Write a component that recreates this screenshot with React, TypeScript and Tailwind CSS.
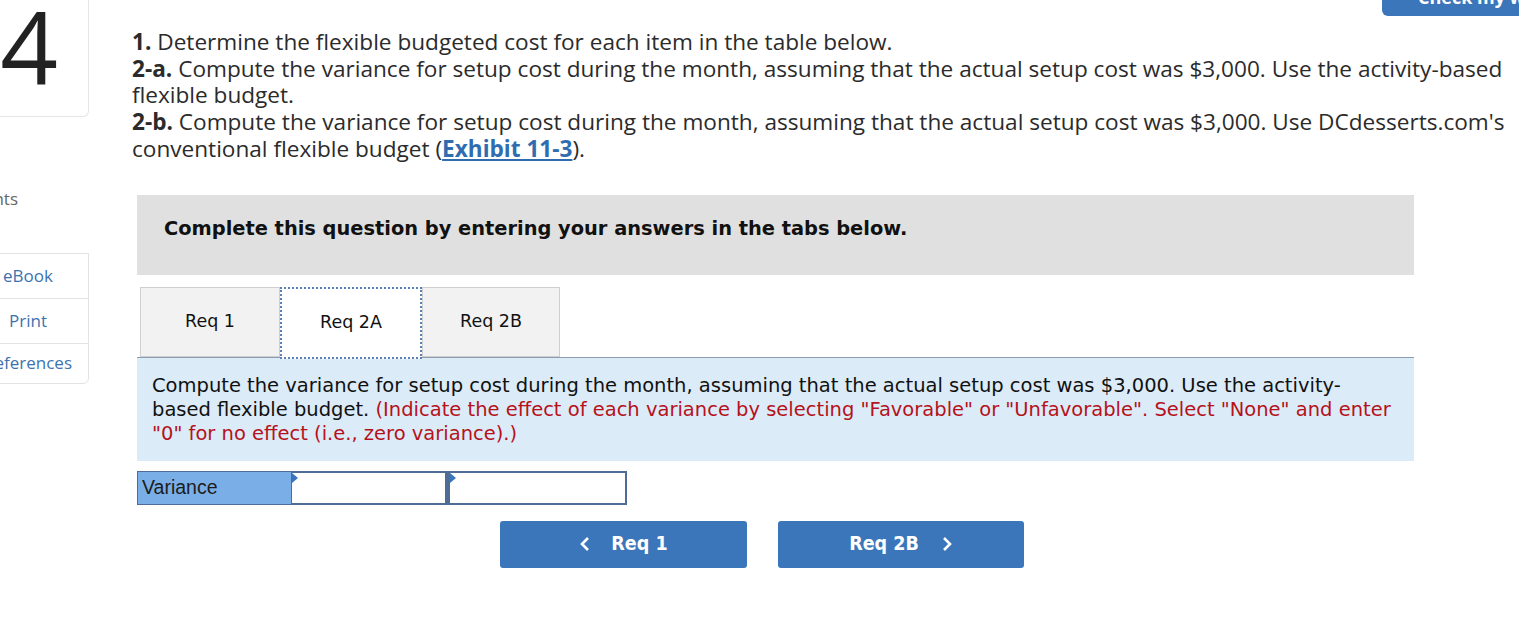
import React from 'react';

const verdana = "font-['DejaVu_Sans',Verdana,sans-serif]";

function SideButton({ label, h, last }: { label: string; h: string; last?: boolean }) {
  return (
    <div
      className={`flex ${h} items-center justify-center border border-[#e3e3e3] bg-white text-[17px] text-[#3d72b0] ${
        last ? 'rounded-br-md' : 'border-b-0'
      }`}
    >
      {label}
    </div>
  );
}

function Tab({ label, w, active }: { label: string; w: string; active?: boolean }) {
  return (
    <div
      className={
        active
          ? `relative z-10 -mb-[2px] flex h-[72px] ${w} items-center justify-center border-2 border-dotted border-[#5b7fb8] bg-white`
          : `flex h-[70px] ${w} items-center justify-center border border-[#cfcfcf] bg-[#f2f2f2]`
      }
    >
      <span className={`${verdana} text-[17.5px] text-[#111]`}>{label}</span>
    </div>
  );
}

export default function App() {
  return (
    <div className="relative h-[633px] w-[1519px] overflow-hidden bg-white font-['Open_Sans',sans-serif]">
      {/* header action, clipped at top */}
      <div className="absolute right-0 top-0 flex h-[16px] w-[137px] items-end overflow-hidden rounded-bl-md bg-[#3a76b9] pb-[10px] pl-[36px]">
        <span className="whitespace-nowrap text-[18px] font-bold leading-none text-white">Check my work</span>
      </div>

      <div className="flex">
        {/* left rail */}
        <div className="-ml-[33px] flex w-[122px] shrink-0 flex-col">
          <div className="flex h-[117px] items-start justify-center rounded-br-md border border-t-0 border-[#e6e6e6] pl-[2px]">
            <span className="text-[101px] font-[380] leading-[92px] text-[#222]">4</span>
          </div>
          <div className="mt-[69px] flex w-[51px] justify-end whitespace-nowrap text-[17px] text-[#666]">
            Points
          </div>
          <div className="mt-[41px] flex flex-col">
            <SideButton label="eBook" h="h-[45px]" />
            <SideButton label="Print" h="h-[45px]" />
            <SideButton label="References" h="h-[41px]" last />
          </div>
        </div>

        {/* main */}
        <div className="ml-[43px] flex flex-col pt-[29px]">
          <div className="w-[1386px] whitespace-nowrap text-[22.6px] leading-[26.7px] text-[#2b2b2b]">
            <p>
              <b>1.</b> Determine the flexible budgeted cost for each item in the table below.
            </p>
            <p>
              <b>2-a.</b> Compute the variance for setup cost during the month, assuming that the actual setup cost
              was $3,000. Use the activity-based
              <br />
              flexible budget.
            </p>
            <p>
              <b>2-b.</b> Compute the variance for setup cost during the month, assuming that the actual setup cost
              was $3,000. Use DCdesserts.com's
              <br />
              conventional flexible budget (
              <a className="font-bold text-[#2f6db0] underline underline-offset-2">Exhibit 11-3</a>).
            </p>
          </div>

          <div className="ml-[5px] mt-[32px] w-[1277px]">
            <div className="h-[80px] bg-[#e0e0e0] pl-[27px] pt-[22px]">
              <p className={`${verdana} text-[19.4px] font-bold leading-[24px] text-[#111]`}>
                Complete this question by entering your answers in the tabs below.
              </p>
            </div>

            <div className="mt-[12px] flex pl-[3px]">
              <Tab label="Req 1" w="w-[140px]" />
              <Tab label="Req 2A" w="w-[142px]" active />
              <Tab label="Req 2B" w="w-[138px]" />
            </div>

            <div
              className={`${verdana} whitespace-nowrap border-t border-[#8c9db0] bg-[#dcebf8] px-[15px] pb-[15px] pt-[16px] text-[19.5px] leading-[24px] text-[#111]`}
            >
              Compute the variance for setup cost during the month, assuming that the actual setup cost was $3,000. Use
              the activity-
              <br />
              based flexible budget.{' '}
              <span className="text-[#b5121b]">
                (Indicate the effect of each variance by selecting "Favorable" or "Unfavorable". Select "None" and
                enter
                <br />
                "0" for no effect (i.e., zero variance).)
              </span>
            </div>

            <div className="mt-[10px] flex h-[34px]">
              <div className="flex w-[155px] items-center border border-[#4f6c94] bg-[#7aaee6] pl-[4px] font-['Liberation_Sans',Arial,sans-serif] text-[19.5px] text-[#1c1c1c]">
                Variance
              </div>
              <div className="relative w-[155px] border-2 border-l-0 border-[#4f6c94] bg-white">
                <span className="absolute left-0 top-0 h-0 w-0 border-y-[5px] border-l-[6px] border-y-transparent border-l-[#3a76b9]" />
              </div>
              <div className="relative w-[180px] border-2 border-l-[3px] border-[#4f6c94] bg-white">
                <span className="absolute left-0 top-0 h-0 w-0 border-y-[5px] border-l-[6px] border-y-transparent border-l-[#3a76b9]" />
              </div>
            </div>

            <div className="ml-[363px] mt-[16px] flex gap-[31px]">
              <button className="flex h-[47px] w-[247px] items-center justify-center gap-[20px] rounded-[3px] bg-[#3a76b9] font-['DejaVu_Sans_Condensed',Tahoma,sans-serif] text-[19.5px] font-bold text-white">
                <svg width="12" height="16" viewBox="0 0 12 16" fill="none" stroke="white" strokeWidth="2.6">
                  <path d="M9 2 L3 8 L9 14" />
                </svg>
                <span>Req 1</span>
              </button>
              <button className="flex h-[47px] w-[246px] items-center justify-center gap-[22px] rounded-[3px] bg-[#3a76b9] font-['DejaVu_Sans_Condensed',Tahoma,sans-serif] text-[19.5px] font-bold text-white">
                <span>Req 2B</span>
                <svg width="12" height="16" viewBox="0 0 12 16" fill="none" stroke="white" strokeWidth="2.6">
                  <path d="M3 2 L9 8 L3 14" />
                </svg>
              </button>
            </div>
          </div>
        </div>
      </div>
    </div>
  );
}
